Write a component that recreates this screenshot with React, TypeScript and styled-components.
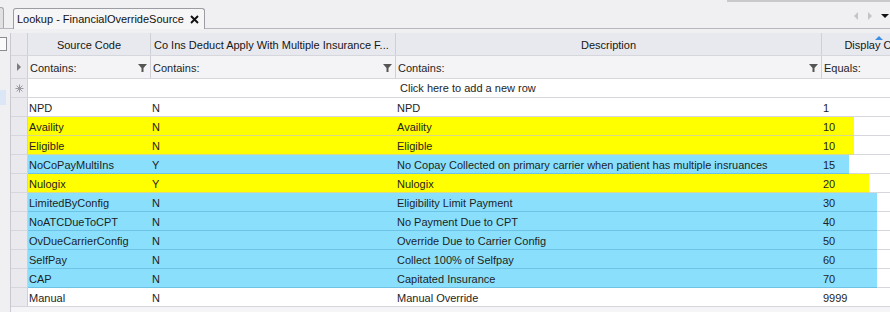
import React from "react";
import styled, { createGlobalStyle } from "styled-components";

const GlobalStyle = createGlobalStyle`
  html, body {
    margin: 0;
    padding: 0;
    background: #f0f0f2;
    overflow: hidden;
  }
  body {
    font-family: "Liberation Sans", Arial, sans-serif;
    font-size: 11px;
    color: #1e1e1e;
  }
`;

const Page = styled.div`
  width: 890px;
  height: 312px;
  display: flex;
  flex-direction: column;
  overflow: hidden;
`;

const TabBar = styled.div`
  height: 28px;
  display: flex;
  align-items: flex-end;
  border-bottom: 1px solid #b7b7be;
  background: linear-gradient(#c9c9cc, #c9c9cc) 727px 0 / 163px 2px no-repeat;
`;

const PrevTab = styled.div`
  width: 3px;
  height: 20px;
  background: #e1e1e4;
  border: 1px solid #a8a8ae;
  border-left: none;
  border-bottom: none;
  border-top-right-radius: 3px;
`;

const Tab = styled.div`
  margin-left: 9px;
  height: 20px;
  margin-bottom: -1px;
  padding: 0 5px 0 3px;
  display: flex;
  align-items: center;
  gap: 6px;
  background: #f6f6f7;
  border: 1px solid #9c9ca3;
  border-bottom: none;
  border-radius: 3px 3px 0 0;
  font-size: 11px;
  color: #111;
`;

const Spacer = styled.div`
  flex: 1;
`;

const NavArrows = styled.div`
  display: flex;
  align-items: center;
  gap: 8px;
  height: 24px;
  padding-right: 1px;
`;

const Body = styled.div`
  flex: 1;
  display: flex;
  padding-top: 4px;
  min-height: 0;
`;

const SidePane = styled.div`
  width: 10px;
  flex: none;
  display: flex;
  flex-direction: column;
`;

const SideBox = styled.div`
  margin-top: 4px;
  width: 6px;
  height: 12px;
  background: #fafafa;
  border: 1px solid #8a8a90;
  border-left: none;
`;

const SideSelection = styled.div`
  margin-top: 39px;
  width: 6px;
  height: 15px;
  background: #dbe7f6;
`;

const Grid = styled.div`
  flex: 1;
  display: flex;
  flex-direction: column;
  overflow: hidden;
  background: #f5f5f7;
  border-left: 1px solid #c9c9d0;
`;

const Row = styled.div<{ $h: number; $bg: string }>`
  display: flex;
  height: ${(p) => p.$h}px;
  flex: none;
  background: ${(p) => p.$bg};
  border-bottom: 1px solid #d6d6dd;
  box-sizing: border-box;
`;

const Indicator = styled.div`
  width: 16px;
  flex: none;
  display: flex;
  align-items: center;
  justify-content: center;
  background: #e9e9ee;
  border-right: 1px solid #cfcfd6;
`;

const HeadCell = styled.div<{ $w: number; $align?: string }>`
  width: ${(p) => p.$w}px;
  flex: none;
  box-sizing: border-box;
  position: relative;
  display: flex;
  align-items: center;
  justify-content: ${(p) => p.$align || "center"};
  padding: 1px 3px 0;
  border-right: 1px solid #cfcfd6;
  white-space: nowrap;
  overflow: hidden;
  color: #151515;
`;

const SortMark = styled.div`
  position: absolute;
  top: 3px;
  left: 53px;
  width: 0;
  height: 0;
  border-left: 4px solid transparent;
  border-right: 4px solid transparent;
  border-bottom: 4px solid #3d8fe6;
`;

const FilterCell = styled.div<{ $w: number }>`
  width: ${(p) => p.$w}px;
  flex: none;
  box-sizing: border-box;
  display: flex;
  align-items: center;
  justify-content: space-between;
  padding: 1px 3px 0 2px;
  border-right: 1px solid #cfcfd6;
  white-space: nowrap;
`;

const NewRowText = styled.div`
  padding-left: 372px;
  display: flex;
  align-items: center;
  white-space: nowrap;
`;

const DataBody = styled.div<{ $fill: string; $line: string; $w: number }>`
  flex: 1;
  display: flex;
  margin-bottom: -1px;
  background:
    linear-gradient(90deg, ${(p) => p.$line} ${(p) => p.$w}px, #d6d6dd ${(p) => p.$w}px) bottom / 100% 1px no-repeat,
    linear-gradient(90deg, ${(p) => p.$fill} ${(p) => p.$w}px, #ffffff ${(p) => p.$w}px);
`;

const Cell = styled.div<{ $w: number }>`
  width: ${(p) => p.$w}px;
  flex: none;
  box-sizing: border-box;
  display: flex;
  align-items: center;
  padding: 0 2px 0 1px;
  white-space: nowrap;
  overflow: hidden;
`;

const COLS = [123, 245, 426, 113];

type Item = {
  code: string;
  multi: string;
  desc: string;
  order: string;
  hl?: "yellow" | "blue";
  w?: number;
};

const ROWS: Item[] = [
  { code: "NPD", multi: "N", desc: "NPD", order: "1" },
  { code: "Availity", multi: "N", desc: "Availity", order: "10", hl: "yellow", w: 826 },
  { code: "Eligible", multi: "N", desc: "Eligible", order: "10", hl: "yellow", w: 826 },
  {
    code: "NoCoPayMultiIns",
    multi: "Y",
    desc: "No Copay Collected on primary carrier when patient has multiple insruances",
    order: "15",
    hl: "blue",
    w: 821,
  },
  { code: "Nulogix", multi: "Y", desc: "Nulogix", order: "20", hl: "yellow", w: 841 },
  { code: "LimitedByConfig", multi: "N", desc: "Eligibility Limit Payment", order: "30", hl: "blue", w: 849 },
  { code: "NoATCDueToCPT", multi: "N", desc: "No Payment Due to CPT", order: "40", hl: "blue", w: 849 },
  { code: "OvDueCarrierConfig", multi: "N", desc: "Override Due to Carrier Config", order: "50", hl: "blue", w: 849 },
  { code: "SelfPay", multi: "N", desc: "Collect 100% of Selfpay", order: "60", hl: "blue", w: 849 },
  { code: "CAP", multi: "N", desc: "Capitated Insurance", order: "70", hl: "blue", w: 849 },
  { code: "Manual", multi: "N", desc: "Manual Override", order: "9999" },
];

const FILLS = {
  yellow: { fill: "#ffff00", line: "#d9d98c" },
  blue: { fill: "#8ae0fc", line: "#6cc3e6" },
};

const Funnel = () => (
  <svg width="9" height="8" viewBox="0 0 9 8">
    <path d="M0 0 H9 L5.5 4 V8 H3.5 V4 Z" fill="#555" />
  </svg>
);

const CloseX = () => (
  <svg width="9" height="9" viewBox="0 0 9 9">
    <path d="M1 1 L8 8 M8 1 L1 8" stroke="#111" strokeWidth="1.9" />
  </svg>
);

const Triangle = ({ dir, color }: { dir: "left" | "right" | "down"; color: string }) => {
  const d = dir === "left" ? "M5 0 V8 L1 4 Z" : dir === "right" ? "M1 0 V8 L5 4 Z" : "M0 2 H8 L4 6 Z";
  return (
    <svg width={dir === "down" ? 8 : 6} height="8" viewBox={dir === "down" ? "0 0 8 8" : "0 0 6 8"}>
      <path d={d} fill={color} />
    </svg>
  );
};

const Star = () => (
  <svg width="9" height="9" viewBox="0 0 9 9">
    <path d="M4.5 0.5 V8.5 M0.5 4.5 H8.5 M1.6 1.6 L7.4 7.4 M7.4 1.6 L1.6 7.4" stroke="#9a9aa2" strokeWidth="1" />
  </svg>
);

const App: React.FC = () => {
  return (
    <>
      <GlobalStyle />
      <Page>
        <TabBar>
          <PrevTab />
          <Tab>
            <span>Lookup - FinancialOverrideSource</span>
            <CloseX />
          </Tab>
          <Spacer />
          <NavArrows>
            <Triangle dir="left" color="#c4c4c8" />
            <Triangle dir="right" color="#c4c4c8" />
            <Triangle dir="down" color="#111" />
          </NavArrows>
        </TabBar>
        <Body>
          <SidePane>
            <SideBox />
            <SideSelection />
          </SidePane>
          <Grid>
            <Row $h={23} $bg="#e8e9ee">
              <Indicator />
              <HeadCell $w={COLS[0]}>Source Code</HeadCell>
              <HeadCell $w={COLS[1]} $align="flex-start">
                Co Ins Deduct Apply With Multiple Insurance F...
              </HeadCell>
              <HeadCell $w={COLS[2]}>Description</HeadCell>
              <HeadCell $w={COLS[3]}>
                <SortMark />
                Display Order
              </HeadCell>
            </Row>
            <Row $h={23} $bg="#f4f4f6">
              <Indicator>
                <Triangle dir="right" color="#7a7a80" />
              </Indicator>
              <FilterCell $w={COLS[0]}>
                Contains:
                <Funnel />
              </FilterCell>
              <FilterCell $w={COLS[1]}>
                Contains:
                <Funnel />
              </FilterCell>
              <FilterCell $w={COLS[2]}>
                Contains:
                <Funnel />
              </FilterCell>
              <FilterCell $w={COLS[3]}>Equals:</FilterCell>
            </Row>
            <Row $h={19} $bg="#ffffff">
              <Indicator>
                <Star />
              </Indicator>
              <NewRowText>Click here to add a new row</NewRowText>
            </Row>
            {ROWS.map((r) => {
              const c = r.hl ? FILLS[r.hl] : { fill: "#ffffff", line: "#d6d6dd" };
              return (
                <Row key={r.code} $h={19} $bg="transparent">
                  <Indicator />
                  <DataBody $fill={c.fill} $line={c.line} $w={r.w || 0}>
                    <Cell $w={COLS[0]}>{r.code}</Cell>
                    <Cell $w={COLS[1]}>{r.multi}</Cell>
                    <Cell $w={COLS[2]}>{r.desc}</Cell>
                    <Cell $w={COLS[3]}>{r.order}</Cell>
                  </DataBody>
                </Row>
              );
            })}
          </Grid>
        </Body>
      </Page>
    </>
  );
};

export default App;
